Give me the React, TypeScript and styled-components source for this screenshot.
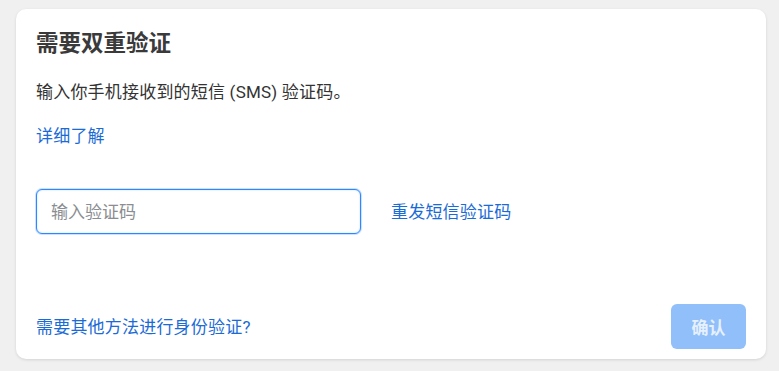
import React from 'react'
import styled, { createGlobalStyle } from 'styled-components'

const GlobalStyle = createGlobalStyle`
  html, body {
    margin: 0;
    padding: 0;
    background: #f0f0f0;
  }
  body {
    font-family: 'Roboto', 'Noto Sans CJK SC', sans-serif;
  }
`

const Page = styled.div`
  padding: 9px 13px 12px 16px;
`

const Card = styled.div`
  width: 750px;
  height: 350px;
  box-sizing: border-box;
  background: #fff;
  border-radius: 10px;
  box-shadow: 0 1px 3px rgba(0, 0, 0, 0.12);
  padding: 20px 20px 10px 20px;
  display: flex;
  flex-direction: column;
`

const Title = styled.h2`
  font-size: 22.5px;
  font-weight: 700;
  line-height: 28px;
  color: #3a3a3a;
  margin: 0;
`

const Desc = styled.p`
  font-size: 17px;
  letter-spacing: 0.2px;
  line-height: 24px;
  color: #333;
  margin: 23px 0 0;
`

const Link = styled.a`
  font-size: 17px;
  letter-spacing: 0.2px;
  line-height: 24px;
  color: #1b6bd6;
  text-decoration: none;
  cursor: pointer;
`

const LearnRow = styled.div`
  margin-top: 20px;
`

const CodeRow = styled.div`
  display: flex;
  align-items: center;
  gap: 30px;
  margin-top: 41px;
`

const CodeInput = styled.input`
  width: 325px;
  height: 45px;
  box-sizing: border-box;
  border: 1px solid #2d88ff;
  border-radius: 6px;
  box-shadow: 0 0 0 1px rgba(45, 136, 255, 0.25), inset 0 0 2px rgba(45, 136, 255, 0.3);
  padding: 0 14px;
  font-family: 'Roboto', 'Noto Sans CJK SC', sans-serif;
  font-size: 17px;
  color: #333;
  outline: none;
  &::placeholder {
    color: #8a8d91;
  }
`

const Footer = styled.div`
  margin-top: auto;
  display: flex;
  align-items: center;
  justify-content: space-between;
`

const ConfirmButton = styled.button`
  width: 75px;
  height: 45px;
  border: none;
  border-radius: 6px;
  background: #90bff9;
  color: #e6f0fe;
  font-family: 'Roboto', 'Noto Sans CJK SC', sans-serif;
  font-size: 17px;
  font-weight: 700;
  cursor: not-allowed;
`

const App: React.FC = () => {
  return (
    <Page>
      <GlobalStyle />
      <Card>
        <Title>需要双重验证</Title>
        <Desc>输入你手机接收到的短信 (SMS) 验证码。</Desc>
        <LearnRow>
          <Link>详细了解</Link>
        </LearnRow>
        <CodeRow>
          <CodeInput placeholder='输入验证码' />
          <Link>重发短信验证码</Link>
        </CodeRow>
        <Footer>
          <Link>需要其他方法进行身份验证?</Link>
          <ConfirmButton disabled>确认</ConfirmButton>
        </Footer>
      </Card>
    </Page>
  )
}

export default App
